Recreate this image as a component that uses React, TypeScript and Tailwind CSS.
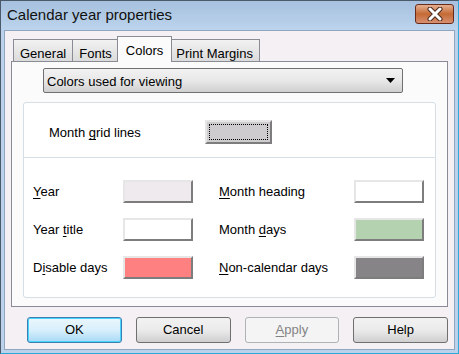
import React from "react";

const font = { fontFamily: '"Liberation Sans", Arial, sans-serif' };

function U({ children }: { children: React.ReactNode }) {
  return <span className="underline underline-offset-2">{children}</span>;
}

function Swatch({ color }: { color: string }) {
  return (
    <div
      className="h-[23px] w-[70px] border-t-2 border-l-2 border-r-2 border-b-2 border-t-[#e6e6e6] border-l-[#e6e6e6] border-r-[#7d7d7d] border-b-[#7d7d7d]"
      style={{ backgroundColor: color }}
    />
  );
}

function Row({ label, color, w }: { label: React.ReactNode; color: string; w: string }) {
  return (
    <div className="flex items-center h-[23px]">
      <div className={w}>{label}</div>
      <Swatch color={color} />
    </div>
  );
}

function Tab({ label, active }: { label: React.ReactNode; active?: boolean }) {
  if (active) {
    return (
      <div className="relative z-10 -mx-[2px] h-[26px] px-[8px] pt-[4px] border border-b-0 border-[#898c95] bg-[#fbfbfb] text-[13px]">
        {label}
      </div>
    );
  }
  return (
    <div className="h-[23px] mt-[3px] px-[6px] pt-[4px] border border-b-0 border-[#898c95] -ml-px first:ml-0 bg-gradient-to-b from-[#f2f2f2] to-[#dadada] text-[13px]">
      {label}
    </div>
  );
}

function Btn({ children, kind }: { children: React.ReactNode; kind?: "default" | "disabled" }) {
  const base = "w-[97px] h-[26px] rounded-[3px] flex items-center justify-center text-[13px]";
  if (kind === "default")
    return (
      <div className={`${base} border border-[#3c7fb1] bg-gradient-to-b from-[#eaf6fd] via-[#d9f0fc] to-[#a7d9f5] shadow-[inset_0_0_0_1px_#48d4fc]`}>
        {children}
      </div>
    );
  if (kind === "disabled")
    return <div className={`${base} border border-[#adb2b5] bg-[#f4f4f4] text-[#838383]`}>{children}</div>;
  return (
    <div className={`${base} border border-[#707070] bg-gradient-to-b from-[#f2f2f2] via-[#ebebeb] to-[#cfcfcf]`}>
      {children}
    </div>
  );
}

export default function App() {
  return (
    <div style={font} className="w-[459px] h-[354px] flex flex-col bg-[#bcd2ea] border border-[#4a5a6a] border-b-[#2aa8d8] border-r-[#2aa8d8] text-black overflow-hidden">
      {/* title bar */}
      <div className="h-[29px] flex items-center justify-between pl-[6px] pr-[4px] bg-gradient-to-b from-[#a6c0de] to-[#bcd4ec]">
        <div className="text-[15px] text-[#111]">Calendar year properties</div>
        <div className="w-[39px] h-[20px] mb-[3px] rounded-[3px] border border-[#6a2a1a] bg-gradient-to-b from-[#e4b090] via-[#c46a34] to-[#d89070] flex items-center justify-center">
          <svg width="16" height="14" viewBox="0 0 16 14">
            <path d="M3 2 L13 12 M13 2 L3 12" stroke="#4a2a20" strokeWidth="5" strokeLinecap="round" />
            <path d="M3 2 L13 12 M13 2 L3 12" stroke="#fff" strokeWidth="3" strokeLinecap="round" />
          </svg>
        </div>
      </div>

      {/* client */}
      <div className="flex-1 mx-[3px] mb-[3px] border border-[#8fa6c0] bg-[#f4f0f4] flex flex-col px-[6px] pt-[7px]">
        <div className="flex pl-[2px] h-[24px] items-end">
          <Tab label="General" />
          <Tab label="Fonts" />
          <Tab label="Colors" active />
          <Tab label="Print Margins" />
        </div>
        <div className="h-[246px] -mt-px border border-[#898c95] bg-[#fbfbfb] flex flex-col px-[11px] pt-[6px]">
          <div className="ml-[20px] w-[360px] h-[25px] rounded-[2px] border border-[#707070] bg-gradient-to-b from-[#f2f2f2] via-[#e8e8e8] to-[#d0d0d0] flex items-center justify-between pl-[3px] pr-[7px] text-[13px]">
            <span className="pt-[2px]">Colors used for viewing</span>
            <svg width="9" height="5" viewBox="0 0 9 5">
              <path d="M0 0 H9 L4.5 5 Z" fill="#000" />
            </svg>
          </div>
          <div className="mt-[9px] h-[196px] rounded-[3px] border border-[#d5dfe5] bg-white flex flex-col text-[13px]">
            <div className="h-[55px] flex items-start pt-[17px] pl-[25px] border-b border-[#d5dfe5]">
              <div className="w-[156px] h-[24px] flex items-center pt-[2px]">
                <span>
                  Month <U>g</U>rid lines
                </span>
              </div>
              <div className="h-[24px] w-[67px] border-2 border-t-[#e6e6e6] border-l-[#e6e6e6] border-r-[#7d7d7d] border-b-[#7d7d7d] bg-[#cfcccf] p-[2px]">
                <div className="w-full h-full border border-dotted border-black" />
              </div>
            </div>
            <div className="flex pl-[9px] pt-[22px]">
              <div className="flex flex-col gap-[15px] w-[186px]">
                <Row w="w-[90px]" label={<><U>Y</U>ear</>} color="#eeeaee" />
                <Row w="w-[90px]" label={<>Year <U>t</U>itle</>} color="#ffffff" />
                <Row w="w-[90px]" label={<>D<U>i</U>sable days</>} color="#ff8080" />
              </div>
              <div className="flex flex-col gap-[15px]">
                <Row w="w-[135px]" label={<><U>M</U>onth heading</>} color="#ffffff" />
                <Row w="w-[135px]" label={<>Month <U>d</U>ays</>} color="#b4d2b0" />
                <Row w="w-[135px]" label={<><U>N</U>on-calendar days</>} color="#868486" />
              </div>
            </div>
          </div>
        </div>
        <div className="flex gap-[14px] pl-[16px] mt-[10px]">
          <Btn kind="default">OK</Btn>
          <Btn>Cancel</Btn>
          <Btn kind="disabled">
            <U>A</U>pply
          </Btn>
          <Btn>Help</Btn>
        </div>
      </div>
    </div>
  );
}
